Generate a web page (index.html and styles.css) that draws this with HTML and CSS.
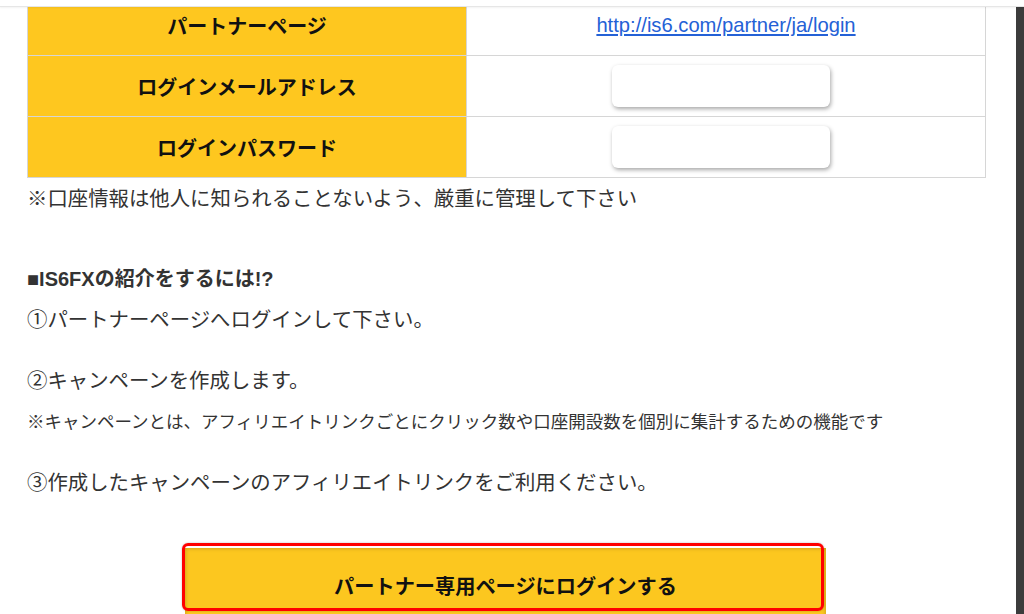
FILE: index.html
```html
<!DOCTYPE html>
<html lang="ja">

<head>
    <meta charset="UTF-8">
    <meta name="viewport" content="width=device-width, initial-scale=1.0">
    <title>パートナーページ</title>
    <link rel="stylesheet" href="styles.css">
</head>

<body>
    <div class="topbar"></div>

    <div class="page">
        <main class="content">
            <div class="info-table">
                <div class="info-row">
                    <div class="info-label">パートナーページ</div>
                    <div class="info-value">
                        <a href="#" class="partner-link">http://is6.com/partner/ja/login</a>
                    </div>
                </div>
                <div class="info-row">
                    <div class="info-label">ログインメールアドレス</div>
                    <div class="info-value"><input type="text" class="info-input"></div>
                </div>
                <div class="info-row">
                    <div class="info-label">ログインパスワード</div>
                    <div class="info-value"><input type="password" class="info-input"></div>
                </div>
            </div>

            <p class="note">※口座情報は他人に知られることないよう、厳重に管理して下さい</p>

            <p class="section-title">■IS6FXの紹介をするには!?</p>
            <p class="step">①パートナーページへログインして下さい。</p>
            <p class="step step-gap">②キャンペーンを作成します。</p>
            <p class="step-note">※キャンペーンとは、アフィリエイトリンクごとにクリック数や口座開設数を個別に集計するための機能です</p>
            <p class="step step-gap">③作成したキャンペーンのアフィリエイトリンクをご利用ください。</p>

            <div class="login-wrap">
                <a href="#" class="login-button">パートナー専用ページにログインする</a>
                <!-- 赤枠の注釈 -->
                <div class="highlight"></div>
            </div>
        </main>
        <div class="scrollbar"></div>
    </div>
</body>

</html>
```

FILE: styles.css
```css
body {
    margin: 0;
    font-family: "Liberation Sans", "Noto Sans CJK JP", sans-serif;
    color: #333333;
    background-color: #ffffff;
}

.topbar {
    position: fixed;
    top: 0;
    left: 0;
    right: 0;
    height: 6px;
    background-color: #ffffff;
    border-bottom: 1px solid #e6e6e6;
    box-shadow: 0 1px 2px rgba(0, 0, 0, 0.05);
    z-index: 10;
}

.page {
    display: flex;
    height: 100vh;
    overflow: hidden;
}

.content {
    width: 959px;
    padding-left: 27px;
    margin-right: 30px;
}

.scrollbar {
    width: 8px;
    background-color: #3c3c3c;
}

/* テーブル */
.info-table {
    margin-top: -5px;
    border-left: 1px solid #d6d6d6;
    border-right: 1px solid #d6d6d6;
}

.info-row {
    display: flex;
    height: 61px;
    box-sizing: border-box;
    border-bottom: 1px solid #d6d6d6;
}

.info-label {
    width: 439px;
    box-sizing: border-box;
    border-right: 1px solid #d6d6d6;
    background-color: #fec71f;
    display: flex;
    justify-content: center;
    align-items: center;
    font-size: 20px;
    font-weight: bold;
    color: #111111;
}

.info-value {
    flex: 1;
    display: flex;
    justify-content: center;
    align-items: center;
}

.partner-link {
    font-size: 20.2px;
    color: #2461d6;
    text-decoration: underline;
}

.info-input {
    width: 218px;
    height: 42px;
    margin-right: 10px;
    box-sizing: border-box;
    border: none;
    border-radius: 6px;
    background-color: #ffffff;
    box-shadow: 1px 2px 4px rgba(0, 0, 0, 0.35);
}

/* 本文 */
p {
    margin: 0;
}

.note {
    margin-top: 5px;
    font-size: 20.4px;
    line-height: 32px;
}

.section-title {
    margin-top: 48px;
    font-size: 20px;
    font-weight: bold;
    line-height: 32px;
}

.step {
    margin-top: 9px;
    font-size: 20.4px;
    line-height: 32px;
}

.step-gap {
    margin-top: 29px;
}

.step-note {
    margin-top: 9px;
    font-size: 17.5px;
    line-height: 32px;
}

/* ログインボタン */
.login-wrap {
    position: relative;
    margin-top: 49px;
    margin-left: 158px;
    width: 641px;
}

.login-button {
    display: flex;
    justify-content: center;
    align-items: center;
    height: 74px;
    background-color: #fcc71f;
    box-shadow: inset 0 0 4px rgba(0, 0, 0, 0.25);
    color: #111111;
    font-size: 20.2px;
    font-weight: bold;
    text-decoration: none;
}

.highlight {
    position: absolute;
    top: -5px;
    left: -3px;
    width: 642px;
    height: 68px;
    box-sizing: border-box;
    border: 3px solid #ff0000;
    border-radius: 6px;
    box-shadow: 0 0 2px rgba(0, 0, 0, 0.3);
}
```
